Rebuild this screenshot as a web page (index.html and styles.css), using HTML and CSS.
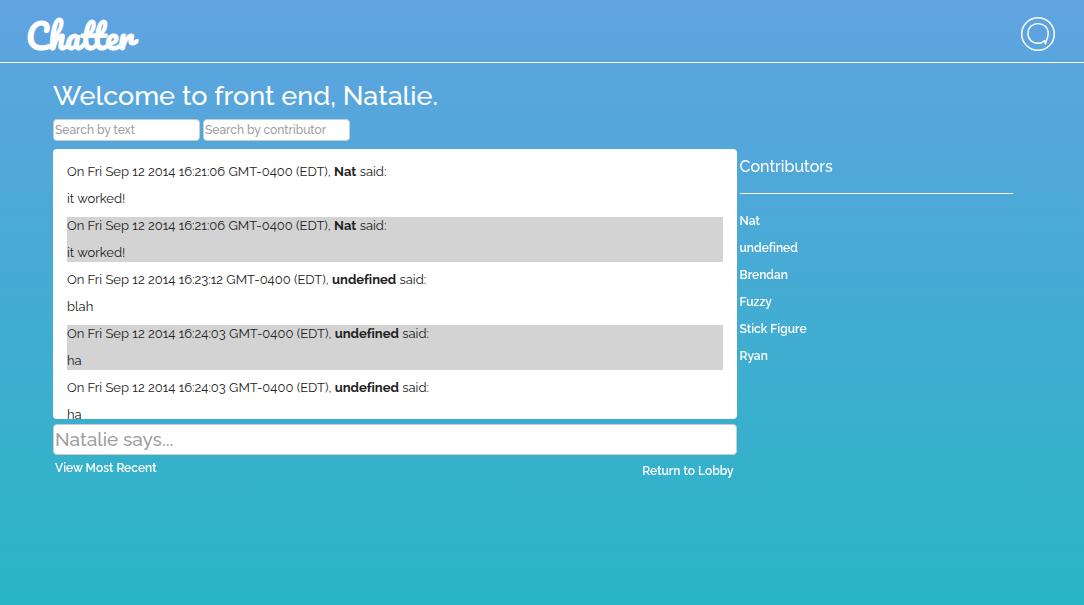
FILE: index.html
```html
<!DOCTYPE html>
<html lang="en">
<head>
<meta charset="utf-8">
<meta name="viewport" content="width=device-width, initial-scale=1">
<title>Chatter</title>
<link rel="stylesheet" href="styles.css">
</head>
<body>
<header class="site-header">
  <a class="logo" href="#">Chatter</a>
  <a class="badge" href="#" aria-label="Account">
    <svg width="36" height="36" viewBox="0 0 36 36" fill="none" stroke="#fff" stroke-linecap="round" stroke-linejoin="round" aria-hidden="true">
      <circle cx="18" cy="18" r="16.3" stroke-width="1.5"/>
      <path d="M25.3 28 L24.8 24.4 C23 26.3 20.7 27.3 18 27.3 C12.2 27.3 8 23.1 8 17.4 C8 11.7 12.2 7.6 18 7.6 C23.8 7.6 28.2 11.7 28.2 17.4 C28.2 21.4 26.6 24.6 25.3 28 Z" stroke-width="1.4"/>
    </svg>
  </a>
</header>
<main class="page">
  <h1 class="title">Welcome to front end, Natalie.</h1>
  <form class="filters">
    <input class="field filter" type="text" placeholder="Search by text" aria-label="Search by text">
    <input class="field filter" type="text" placeholder="Search by contributor" aria-label="Search by contributor">
  </form>
  <div class="columns">
    <section class="chat">
      <div class="messages">
        <article class="message"><p>On Fri Sep 12 2014 16:21:06 GMT-0400 (EDT), <strong>Nat</strong> said:</p><p>it worked!</p></article>
        <article class="message"><p>On Fri Sep 12 2014 16:21:06 GMT-0400 (EDT), <strong>Nat</strong> said:</p><p>it worked!</p></article>
        <article class="message"><p>On Fri Sep 12 2014 16:23:12 GMT-0400 (EDT), <strong>undefined</strong> said:</p><p>blah</p></article>
        <article class="message"><p>On Fri Sep 12 2014 16:24:03 GMT-0400 (EDT), <strong>undefined</strong> said:</p><p>ha</p></article>
        <article class="message"><p>On Fri Sep 12 2014 16:24:03 GMT-0400 (EDT), <strong>undefined</strong> said:</p><p>ha</p></article>
      </div>
      <input class="field compose" type="text" placeholder="Natalie says..." aria-label="Message">
      <nav class="actions">
        <a href="#">View Most Recent</a>
        <a class="lobby" href="#">Return to Lobby</a>
      </nav>
    </section>
    <aside class="contributors">
      <h2 class="subtitle">Contributors</h2>
      <ul class="names">
        <li><a href="#">Nat</a></li>
        <li><a href="#">undefined</a></li>
        <li><a href="#">Brendan</a></li>
        <li><a href="#">Fuzzy</a></li>
        <li><a href="#">Stick Figure</a></li>
        <li><a href="#">Ryan</a></li>
      </ul>
    </aside>
  </div>
</main>
</body>
</html>
```
FILE: styles.css
```css
* {
  box-sizing: border-box;
}

body {
  margin: 0;
  min-height: 100vh;
  background: linear-gradient(#60a3e1, #28b5c5);
  color: #fff;
  font: 13px/18px Raleway, Lato, sans-serif;
  font-variant-ligatures: none;
}

a {
  color: inherit;
  text-decoration: none;
}

.site-header {
  display: flex;
  align-items: center;
  justify-content: space-between;
  padding: 12px 28px 6px 26px;
  border-bottom: 1px solid #fff;
}

.logo {
  padding-top: 4px;
  font-family: Pacifico, Lato, cursive;
  font-size: 33px;
  font-weight: bold;
  line-height: 40px;
}

.badge {
  display: block;
  height: 36px;
}

.badge svg {
  display: block;
}

.page {
  max-width: 1013px;
  padding-left: 53px;
}

.title {
  margin: 0;
  padding: 13px 0 3px;
  font-size: 27px;
  font-weight: 500;
  line-height: 40px;
}

.filters {
  display: flex;
  gap: 3px;
  margin-bottom: 8px;
}

.field {
  padding: 0 1px;
  border: 1px solid #ccc;
  border-radius: 4px;
  background: #fff;
  color: #333;
  font-family: inherit;
}

.field::placeholder {
  color: #a0a0a0;
  opacity: 1;
}

.filter {
  width: 147px;
  height: 22px;
  font-size: 12px;
  font-weight: 500;
}

.columns {
  display: grid;
  grid-template-columns: 5fr 2fr;
  gap: 3px;
}

.messages {
  display: flex;
  flex-direction: column;
  gap: 9px;
  height: 270px;
  padding: 14px;
  overflow-y: auto;
  scrollbar-width: none;
  border-radius: 4px;
  background: #fff;
  color: #222;
}

.message {
  display: grid;
  flex: none;
  gap: 9px;
}

.message:nth-child(even) {
  background: #d3d3d3;
}

.message p {
  margin: 0;
}

.compose {
  display: block;
  width: 100%;
  height: 31px;
  margin-top: 5px;
  padding-bottom: 2px;
  font-size: 19px;
  font-weight: 500;
}

.actions {
  display: flex;
  justify-content: space-between;
  padding: 4px 3px 0 2px;
  font-size: 12px;
  font-weight: 600;
}

.lobby {
  padding-top: 3px;
}

.subtitle {
  margin: 0;
  padding: 6px 0 14px;
  border-bottom: 1px solid #fff;
  font-size: 16px;
  font-weight: 500;
  line-height: 24px;
}

.names {
  display: grid;
  gap: 9px;
  margin: 0;
  padding: 18px 0 0;
  list-style: none;
  font-size: 12px;
  font-weight: 600;
}
```
